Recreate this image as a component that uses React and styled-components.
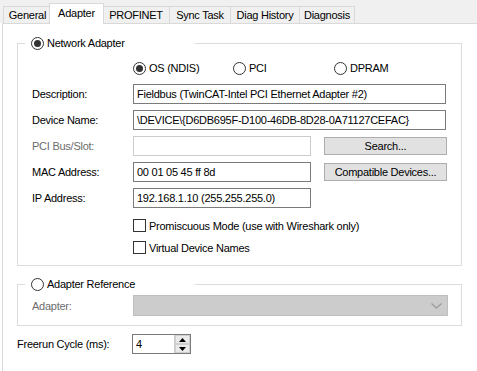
import React from 'react';
import styled, { createGlobalStyle, css } from 'styled-components';

const GlobalStyle = createGlobalStyle`
	html, body {
		margin: 0;
		padding: 0;
		background: #ffffff;
	}
	body {
		font-family: "Liberation Sans", Arial, sans-serif;
		font-size: 11px;
		letter-spacing: -0.25px;
		color: #000000;
	}
	* {
		box-sizing: border-box;
	}
`;

const Window = styled.div`
	width: 477px;
	height: 371px;
	overflow: hidden;
	display: flex;
	flex-direction: column;
	background: #ffffff;
`;

const TabStrip = styled.div`
	height: 23px;
	flex: none;
	display: flex;
	align-items: flex-end;
	padding-left: 3px;
	background: #f0f0f0;
`;

const Tab = styled.div`
	width: ${(p) => p.$w}px;
	height: 17px;
	margin-right: -1px;
	display: flex;
	align-items: center;
	justify-content: center;
	border: 1px solid #d9d9d9;
	border-bottom: none;
	background: #f0f0f0;
	white-space: nowrap;
	${(p) =>
		p.$active &&
		css`
			width: ${p.$w + 3}px;
			height: 21px;
			margin: 0 -2px -1px -2px;
			padding-bottom: 3px;
			background: #ffffff;
			position: relative;
			z-index: 1;
		`}
`;

const Page = styled.div`
	flex: 1;
	border-top: 1px solid #d9d9d9;
	border-left: 1px solid #d9d9d9;
	margin-left: 2px;
	padding: 12px 15px 0 14px;
	display: flex;
	flex-direction: column;
`;

const Group = styled.fieldset`
	margin: 0;
	padding: 0;
	border: 1px solid #dcdcdc;
	min-width: 0;
	& + & {
		margin-top: 11px;
	}
`;

const Legend = styled.legend`
	margin-left: 7px;
	padding: 0 0 0 6px;
	width: 170px;
	height: 14px;
	display: flex;
	align-items: center;
	gap: 3px;
	background: #ffffff;
	line-height: 14px;
`;

const GroupBody = styled.div`
	padding: ${(p) => p.$pad};
	display: grid;
	grid-template-columns: 115px 1fr;
	row-gap: 6px;
`;

const Label = styled.div`
	padding-left: 14px;
	display: flex;
	align-items: center;
	white-space: nowrap;
	color: ${(p) => (p.$disabled ? '#6d6d6d' : '#000000')};
`;

const Field = styled.div`
	display: flex;
	align-items: center;
	gap: 13px;
	min-height: 20px;
`;

const OptionsRow = styled.div`
	grid-column: 2;
	display: grid;
	grid-template-columns: 100px 101px 1fr;
	height: 14px;
	margin-bottom: 3px;
`;

const Option = styled.div`
	display: flex;
	align-items: center;
	gap: 3px;
	white-space: nowrap;
`;

const Radio = styled.span`
	flex: none;
	width: 13px;
	height: 13px;
	border: 1px solid #333333;
	border-radius: 50%;
	background: #ffffff;
	display: inline-flex;
	align-items: center;
	justify-content: center;
	&::after {
		content: '';
		width: 7px;
		height: 7px;
		border-radius: 50%;
		background: ${(p) => (p.$checked ? '#333333' : 'transparent')};
	}
`;

const TextBox = styled.div`
	flex: ${(p) => (p.$w ? 'none' : '1')};
	width: ${(p) => (p.$w ? `${p.$w}px` : 'auto')};
	height: 20px;
	border: 1px solid ${(p) => (p.$disabled ? '#cccccc' : '#7a7a7a')};
	background: #ffffff;
	padding: 0 3px;
	display: flex;
	align-items: center;
	white-space: nowrap;
	overflow: hidden;
`;

const Button = styled.div`
	flex: none;
	width: 123px;
	height: 18px;
	margin-right: -2px;
	border: 1px solid #adadad;
	background: #e1e1e1;
	display: flex;
	align-items: center;
	justify-content: center;
	white-space: nowrap;
`;

const CheckRow = styled.div`
	grid-column: 2;
	display: flex;
	align-items: center;
	gap: 3px;
	height: 13px;
	margin-top: ${(p) => p.$mt || 0}px;
	white-space: nowrap;
`;

const CheckBox = styled.span`
	flex: none;
	width: 13px;
	height: 13px;
	border: 1px solid #333333;
	background: #ffffff;
`;

const Combo = styled.div`
	height: 21px;
	margin-right: -2px;
	border: 1px solid #bfbfbf;
	background: #cccccc;
	display: flex;
	align-items: center;
	justify-content: flex-end;
	padding-right: 5px;
`;

const BottomRow = styled.div`
	margin-top: 8px;
	display: grid;
	grid-template-columns: 115px auto;
	align-items: center;
`;

const Spin = styled.div`
	width: 59px;
	height: 20px;
	border: 1px solid #7a7a7a;
	background: #ffffff;
	display: flex;
`;

const SpinText = styled.div`
	flex: 1;
	padding-left: 3px;
	display: flex;
	align-items: center;
`;

const SpinButtons = styled.div`
	width: 16px;
	display: flex;
	flex-direction: column;
	border-left: 1px solid #cccccc;
`;

const SpinButton = styled.div`
	flex: 1;
	background: #eaeaea;
	border: 1px solid #d0d0d0;
	display: flex;
	align-items: center;
	justify-content: center;
`;

const Arrow = ({ up }) => (
	<svg width="7" height="4" viewBox="0 0 7 4">
		<path d={up ? 'M0 4 L3.5 0 L7 4 Z' : 'M0 0 L3.5 4 L7 0 Z'} fill="#000" />
	</svg>
);

const Chevron = () => (
	<svg width="11" height="6" viewBox="0 0 11 6">
		<path d="M0.5 0.5 L5.5 5 L10.5 0.5" fill="none" stroke="#9a9a9a" strokeWidth="1.2" />
	</svg>
);

const tabs = [
	{ name: 'General', w: 49 },
	{ name: 'Adapter', w: 52, active: true },
	{ name: 'PROFINET', w: 68 },
	{ name: 'Sync Task', w: 62 },
	{ name: 'Diag History', w: 70 },
	{ name: 'Diagnosis', w: 56 },
];

export default function App() {
	return (
		<>
			<GlobalStyle />
			<Window>
				<TabStrip>
					{tabs.map((t) => (
						<Tab key={t.name} $w={t.w} $active={t.active}>
							{t.name}
						</Tab>
					))}
				</TabStrip>
				<Page>
					<Group>
						<Legend>
							<Radio $checked />
							Network Adapter
						</Legend>
						<GroupBody $pad="11px 15px 11px 0">
							<OptionsRow>
								<Option>
									<Radio $checked />
									OS (NDIS)
								</Option>
								<Option>
									<Radio />
									PCI
								</Option>
								<Option>
									<Radio />
									DPRAM
								</Option>
							</OptionsRow>

							<Label>Description:</Label>
							<Field>
								<TextBox>Fieldbus (TwinCAT-Intel PCI Ethernet Adapter #2)</TextBox>
							</Field>

							<Label>Device Name:</Label>
							<Field>
								<TextBox>\DEVICE\{'{'}D6DB695F-D100-46DB-8D28-0A71127CEFAC{'}'}</TextBox>
							</Field>

							<Label $disabled>PCI Bus/Slot:</Label>
							<Field>
								<TextBox $w={178} $disabled />
								<Button>Search...</Button>
							</Field>

							<Label>MAC Address:</Label>
							<Field>
								<TextBox $w={178}>00 01 05 45 ff 8d</TextBox>
								<Button>Compatible Devices...</Button>
							</Field>

							<Label>IP Address:</Label>
							<Field>
								<TextBox $w={178}>192.168.1.10 (255.255.255.0)</TextBox>
							</Field>

							<CheckRow $mt={5}>
								<CheckBox />
								Promiscuous Mode (use with Wireshark only)
							</CheckRow>
							<CheckRow $mt={3}>
								<CheckBox />
								Virtual Device Names
							</CheckRow>
						</GroupBody>
					</Group>

					<Group>
						<Legend>
							<Radio />
							Adapter Reference
						</Legend>
						<GroupBody $pad="4px 15px 9px 0">
							<Label $disabled>Adapter:</Label>
							<Combo>
								<Chevron />
							</Combo>
						</GroupBody>
					</Group>

					<BottomRow>
						<div>Freerun Cycle (ms):</div>
						<Spin>
							<SpinText>4</SpinText>
							<SpinButtons>
								<SpinButton>
									<Arrow up />
								</SpinButton>
								<SpinButton>
									<Arrow />
								</SpinButton>
							</SpinButtons>
						</Spin>
					</BottomRow>
				</Page>
			</Window>
		</>
	);
}
